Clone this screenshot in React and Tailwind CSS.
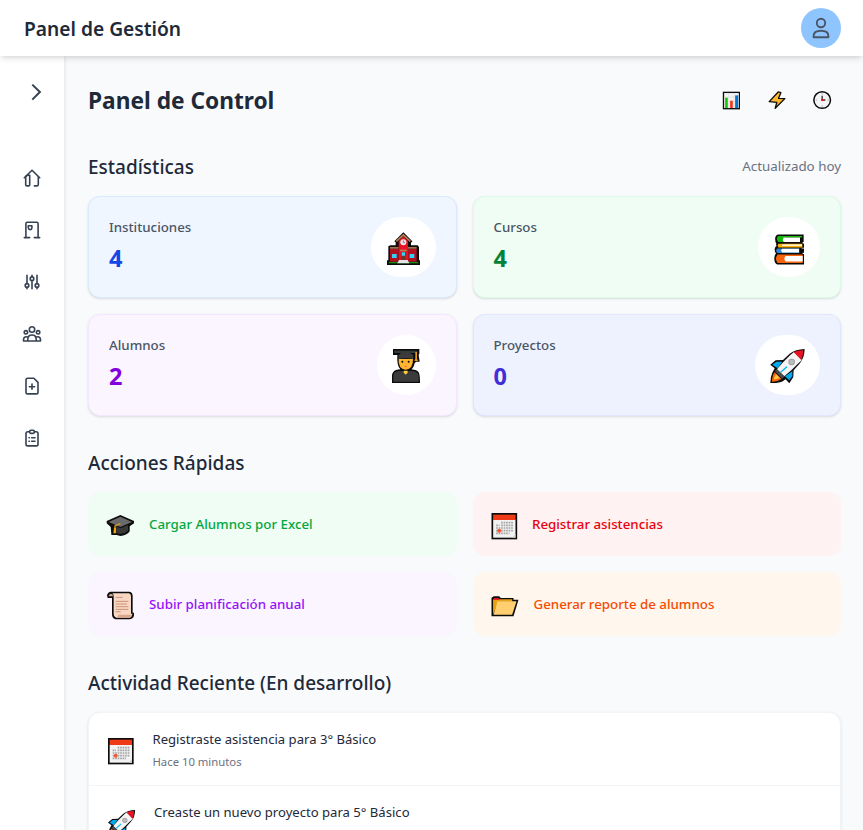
const dark = "#0c0c0c";

function School() {
  return (
    <>
      <path d="M0 98V84H4V42L10 39H26V30L22 27L49 0L76 27L72 31V39H92L96 44V84H99V98Z" fill={dark} />
      <path d="M9 50H35V88H9ZM63 50H89V88H63Z" fill="#b01020" />
      <path d="M9 44H35V49H9ZM63 44H89V49H63Z" fill="#a4714f" />
      <path d="M35 26L49 12L63 26V88H35Z" fill="#e81224" />
      <path d="M28 27L49 8L70 27" fill="none" stroke="#b87f58" strokeWidth="5" />
      <circle cx="49" cy="30" r="9" fill="#e8e8e8" />
      <path d="M49 24V31H54" fill="none" stroke="#555" strokeWidth="2" />
      <path d="M39 52H59V57H39Z" fill="#b87f58" />
      <path d="M42 59H56V84H42Z" fill="#6b3a28" />
      <path d="M44 60H54V70H44ZM15 65H29V77H15ZM68 65H82V77H68Z" fill="#31d2f7" />
      <path d="M5 89H94V93H5Z" fill="#13900e" />
      <path d="M36 83H62L67 93H31Z" fill="#e4e4e4" />
    </>
  );
}

function Student() {
  return (
    <>
      <path d="M3 0H82V14L80 17L83 38H72L68 43Q64 58 58 61Q76 63 80 70Q84 76 84 102H0V78Q2 67 12 63Q19 61 25 61Q14 50 16 18H3Z" fill={dark} />
      <path d="M7 5H76V12H7Z" fill="#343c38" />
      <path d="M20 30Q18 60 41 62Q64 60 63 30Z" fill="#ffb52e" />
      <path d="M19 30V19Q27 10 40 10Q55 10 64 19V30Q42 26 19 30Z" fill="#3b3b3b" />
      <circle cx="31" cy="38" r="3" fill={dark} />
      <circle cx="50" cy="38" r="3" fill={dark} />
      <path d="M36 51H46L44 54H38Z" fill="#f5705c" />
      <path d="M70 9H75V29L78 36H67L70 29Z" fill="#e19a1a" />
      <path d="M4 98V79Q6 66 24 66H34L41 77L48 66H57Q78 66 80 80V98Z" fill="#3b3b3b" />
      <path d="M35 65H47V71L41 77L35 71Z" fill="#ffc83d" />
    </>
  );
}

function Books() {
  return (
    <>
      <path d="M12 0H89V23H86V27H90V40H83V42H90V55H86V59H90V90H10Q0 86 1 70Q2 61 6 57Q0 50 3 40Q5 36 8 35Q5 31 7 27Q2 21 4 8Q7 0 12 0Z" fill={dark} />
      <path d="M13 5H84V9H33V23H13Q4 13 13 5Z" fill="#16b80c" />
      <path d="M29 9H78V23H29Q24 16 29 9Z" fill="#fff" />
      <path d="M13 28H85V39H13Q9 33 13 28Z" fill="#fbad09" />
      <path d="M24 30H84V35H24Z" fill="#fff3c5" />
      <path d="M10 42H76V56H10Q3 48 10 42Z" fill="#2f87d7" />
      <path d="M24 43H75V54H24Q19 48 24 43Z" fill="#fff" />
      <path d="M11 60H86V86H11Q1 73 11 60Z" fill="#f7630c" />
      <path d="M35 65H86V81H35Q27 73 35 65Z" fill="#fff" />
    </>
  );
}

function Rocket() {
  return (
    <>
      <path d="M103 0Q103 27 87 45L70 64L69 84L57 103L46 91L35 98Q19 103 0 103Q0 84 6 71L13 58L0 47L16 34L38 33L58 14Q76 1 103 0Z" fill={dark} />
      <path d="M6 47L18 38H36L22 58ZM66 67V82L57 94L44 82Z" fill="#00a8ee" />
      <path d="M71 9L95 33L82 45L63 64L42 82L20 61L39 39L60 18Z" fill="#f4f4f4" />
      <path d="M70 9Q82 4 99 4Q99 20 93 33Z" fill="#e81224" />
      <circle cx="64" cy="39" r="10" fill="#a0a0a0" />
      <circle cx="64" cy="39" r="7" fill="#bcbcbc" />
      <path d="M20 61L42 82L36 89L14 67Z" fill="#4c4c4c" />
      <path d="M31 70L50 53" stroke="#00b7f0" strokeWidth="4" />
      <path d="M13 70L34 90Q20 99 5 98Q5 80 13 70Z" fill="#f7630c" />
      <path d="M18 76L28 86Q19 93 11 91Q12 82 18 76Z" fill="#ffc83d" />
    </>
  );
}

function SmallRocket() {
  return (
    <g transform="scale(0.79)">
      <Rocket />
    </g>
  );
}

function Calendar() {
  return (
    <>
      <path d="M0 0H77V79H0Z" fill={dark} />
      <path d="M5 20H72V74H5Z" fill="#f2f2f2" />
      <path d="M5 5H72V21H5Z" fill="#f03a17" />
      <path d="M29 29H66M29 37H66M14 37H24M14 45H66M14 53H66M14 61H54" stroke="#a2a2a2" strokeWidth="5" strokeDasharray="5 2.5" fill="none" />
      <circle cx="23" cy="53" r="6" fill="#f05a3a" />
      <path d="M62 74L72 64V74Z" fill="#cfcfcf" />
    </>
  );
}

function GradCap() {
  return (
    <>
      <path d="M41 0L82 18V25L69 34V49Q60 62 41 63L30 60H14L12 36L0 25V18Z" fill={dark} />
      <path d="M41 5L76 21L41 36L6 21Z" fill="#6a6a6a" />
      <path d="M29 34L41 40L64 30V47Q52 58 38 56L29 54Z" fill="#383838" />
      <path d="M41 26L25 33L25 42" stroke="#e19a1a" strokeWidth="4" fill="none" />
      <path d="M22 38H28V55H20Z" fill="#f0a30a" />
    </>
  );
}

function Scroll() {
  return (
    <>
      <path d="M10 0H68Q77 2 77 13V63H81V72Q78 82 67 83H25Q15 80 15 68V19H2L0 10Q3 1 10 0Z" fill={dark} />
      <path d="M16 5H66Q72 6 72 14V66H76Q74 77 67 78H27Q20 76 20 67V14Q20 8 16 5Z" fill="#f7d7c4" />
      <path d="M5 14Q6 6 12 6Q18 7 18 14Z" fill="#d9a88a" />
      <path d="M34 69H76Q74 78 65 78H29Q34 75 34 69Z" fill="#d9a88a" />
      <path d="M26 17H47M26 29H64M26 37H60M26 45H64M26 53H64M26 60H41" stroke="#c99574" strokeWidth="3" />
    </>
  );
}

function Folder() {
  return (
    <>
      <path d="M0 4L7 0H23L28 5H66V10H81L66 60H0Z" fill={dark} />
      <path d="M5 9H62V16H20L5 53Z" fill="#e8a317" />
      <path d="M7 5H21L25 10H7Z" fill="#e81224" />
      <path d="M18 15H75L62 55H6Z" fill="#ffcf70" />
      <path d="M5 13H17L6 54Z" fill="#eba20c" />
    </>
  );
}

function Chart() {
  return (
    <>
      <path d="M0 0H52V53H0Z" fill={dark} />
      <path d="M4 4H48V49H4Z" fill="#f3f3f3" />
      <path d="M4 16H48M4 29H48M18 4V49M34 4V49" stroke="#dadada" strokeWidth="1.5" />
      <path d="M7 18H15V49H7Z" fill="#16c60c" />
      <path d="M22 27H30V49H22Z" fill="#f03a17" />
      <path d="M37 11H46V49H37Z" fill="#0078d7" />
    </>
  );
}

function Bolt() {
  return <path d="M30 2L38 4L31 21L50 22L21 51L26 33L3 31Z" fill="#ffb92e" stroke={dark} strokeWidth="4" strokeLinejoin="round" />;
}

function Clock() {
  return (
    <>
      <circle cx="27.5" cy="28" r="25" fill="#f4f4f4" stroke={dark} strokeWidth="4.5" />
      <path d="M27.5 8V12M27.5 44V48M8 28H12M43 28H47" stroke="#aaa" strokeWidth="3" />
      <path d="M27.500 15V28H37" stroke="#333" strokeWidth="4" fill="none" />
      <circle cx="27.5" cy="28" r="3.5" fill="#e81224" />
    </>
  );
}

// Places a drawing made on a triple-density grid inside a box of w x h pixels.
function Emoji({ art: Art, w, h, x, y }) {
  return (
    <svg width={w} height={h} viewBox={`0 0 ${w} ${h}`} className="block shrink-0" aria-hidden="true">
      <g transform={`translate(${x} ${y}) scale(0.3333)`}>
        <Art />
      </g>
    </svg>
  );
}

const navIcons = [
  {
    label: "Inicio",
    art: (
      <>
        <path d="M4.300 11.700L12 4.200l7.700 7.500" />
        <path d="M5.700 10.500v8.200q0 1.200 1.200 1.200h1.700q1.100 0 1.100-1.200V9.200q-2.600-.4-4 1.300" />
        <path d="M18.300 10.800v7.600q0 1.500-1.500 1.500H14.400" />
      </>
    ),
  },
  {
    label: "Instituciones",
    art: (
      <>
        <path d="M5.900 19.300V5.700q0-1.400 1.400-1.400h9.400q1.400 0 1.400 1.400v13.600" />
        <path d="M4.300 19.600h5.400M14.300 19.600h5.400" />
        <path d="M8.300 7.700h3.600v2q0 1.700-1.700 2-1.900-.6-1.900-2z" />
      </>
    ),
  },
  {
    label: "Ajustes",
    art: (
      <>
        <path d="M7 5.200v8.300M7 17.300v1.500M12 5.200v1.600M12 10.600v8.200M17 5.200v8.300M17 17.300v1.500" />
        <circle cx="7" cy="15.400" r="1.800" />
        <circle cx="12" cy="8.700" r="1.800" />
        <circle cx="17" cy="15.400" r="1.800" />
      </>
    ),
  },
  {
    label: "Alumnos",
    art: (
      <>
        <circle cx="12" cy="7.500" r="2.700" />
        <circle cx="5.900" cy="10.300" r="1.700" />
        <circle cx="18.100" cy="10.300" r="1.700" />
        <path d="M7.800 19v-1.700q0-4.300 4.200-4.300t4.200 4.300V19M3.500 19h17v-1.200q0-3-2.900-3-1 0-1.600.4M3.500 19v-1.200q0-3 2.900-3 1 0 1.600.4" />
      </>
    ),
  },
  {
    label: "Nuevo archivo",
    art: (
      <>
        <path d="M7.800 4.300h6.100L18 8.400v9.800q0 1.700-1.700 1.700H7.700Q6 19.900 6 18.200V6q0-1.700 1.800-1.700z" />
        <path d="M12 10.100v5.200M9.400 12.700h5.200" />
      </>
    ),
  },
  {
    label: "Tareas",
    art: (
      <>
        <path d="M9.600 5.800H7.800Q6 5.800 6 7.500v10.700q0 1.700 1.700 1.700h8.600q1.700 0 1.700-1.700V7.500q0-1.700-1.800-1.700h-1.800" />
        <rect x="9.600" y="4.200" width="4.800" height="3.200" rx="1.300" />
        <path d="M9 11.700h.4M11.700 11.700h3.300M9 15.300h.4M11.700 15.300h3.300" />
      </>
    ),
  },
];

const stats = [
  { label: "Instituciones", value: 4, box: "bg-blue-50 border-blue-100", num: "text-blue-700", icon: { art: School, w: 41, h: 36, x: 4, y: 3.3 } },
  { label: "Cursos", value: 4, box: "bg-green-50 border-green-100", num: "text-green-700", icon: { art: Books, w: 38, h: 36, x: 4, y: 5.4 } },
  { label: "Alumnos", value: 2, box: "bg-purple-50 border-purple-100", num: "text-purple-700", icon: { art: Student, w: 35, h: 36, x: 3, y: 2 } },
  { label: "Proyectos", value: 0, box: "bg-indigo-50 border-indigo-100", num: "text-indigo-700", icon: { art: Rocket, w: 41, h: 36, x: 3.3, y: 2 } },
];

const actions = [
  { label: "Cargar Alumnos por Excel", box: "bg-green-50 text-green-600", icon: { art: GradCap, w: 33, h: 32, x: 2.7, y: 7 } },
  { label: "Registrar asistencias", box: "bg-red-50 text-red-600", icon: { art: Calendar, w: 31.5, h: 32, x: 2.5, y: 5 } },
  { label: "Subir planificación anual", box: "bg-purple-50 text-purple-600", icon: { art: Scroll, w: 33, h: 32, x: 3, y: 3.7 } },
  { label: "Generar reporte de alumnos", box: "bg-orange-50 text-orange-600", icon: { art: Folder, w: 33, h: 32, x: 2.5, y: 8.3 } },
];

const activity = [
  { text: "Registraste asistencia para 3° Básico", time: "Hace 10 minutos", icon: { art: Calendar, w: 31.5, h: 32, x: 3, y: 5 } },
  { text: "Creaste un nuevo proyecto para 5° Básico", time: "", icon: { art: SmallRocket, w: 33, h: 32, x: 3, y: 4 } },
];

const tools = [
  { label: "Estadísticas", icon: { art: Chart, w: 18, h: 20, x: 0.8, y: 1.7 } },
  { label: "Acciones", icon: { art: Bolt, w: 18, h: 20, x: 0.2, y: 1.3 } },
  { label: "Actividad", icon: { art: Clock, w: 19, h: 20, x: 0, y: 0.7 } },
];

export default function App() {
  return (
    <div className="flex h-[830px] flex-col overflow-hidden bg-gray-50 font-['Noto_Sans','Open_Sans',sans-serif] text-gray-800">
      <header className="z-20 flex h-14 shrink-0 items-center justify-between bg-white pl-6 pr-[22px] shadow-md">
        <h1 className="pt-0.5 text-[19.2px]/7 font-semibold">Panel de Gestión</h1>
        <button className="flex size-10 items-center justify-center rounded-full bg-[#8ec5ff]" aria-label="Usuario">
          <svg width="24" height="24" viewBox="0 0 24 24" fill="none" stroke="#4a5565" strokeWidth="1.9" strokeLinejoin="round">
            <circle cx="12" cy="7" r="4.200" />
            <path d="M4.600 21.300v-1.200q0-5.300 7.400-5.300t7.400 5.300v1.200z" />
          </svg>
        </button>
      </header>

      <div className="flex min-h-0 flex-1">
        <aside className="z-10 flex w-16 shrink-0 flex-col items-center bg-white pt-6 shadow-[0_0_4px_rgba(0,0,0,0.14)]">
          <svg className="ml-2" width="24" height="24" viewBox="0 0 24 24" fill="none" stroke="#364153" strokeWidth="2">
            <path d="M8.300 4.600l7.600 7.400-7.600 7.600" />
          </svg>
          <nav className="mt-[62px] flex flex-col gap-7">
            {navIcons.map((n) => (
              <svg key={n.label} aria-label={n.label} width="24" height="24" viewBox="0 0 24 24" fill="none" stroke="#364153" strokeWidth="1.6" strokeLinecap="round" strokeLinejoin="round">
                {n.art}
              </svg>
            ))}
          </nav>
        </aside>

        <main className="flex-1 overflow-hidden pl-6 pr-[22px] pt-[22px]">
          <div className="mb-[30px] flex h-11 items-center justify-between">
            <h2 className="pt-0.5 text-[22.7px]/8 font-bold">Panel de Control</h2>
            <div className="flex gap-2">
              {tools.map((t) => (
                <button key={t.label} aria-label={t.label} className="flex w-[37.5px] items-center justify-center">
                  <Emoji {...t.icon} />
                </button>
              ))}
            </div>
          </div>

          <section className="mb-8">
            <div className="mb-4 flex h-7 items-center justify-between">
              <h3 className="pt-0.5 text-[19px]/7 font-medium">Estadísticas</h3>
              <span className="text-[13.35px]/5 text-gray-500">Actualizado hoy</span>
            </div>
            <div className="grid grid-cols-2 gap-4">
              {stats.map((s) => (
                <div key={s.label} className={`flex h-[102px] items-center justify-between rounded-xl border p-5 shadow-sm ${s.box}`}>
                  <div className="flex h-15 flex-col">
                    <p className="text-[13.3px]/5 font-medium text-gray-600">{s.label}</p>
                    <p className={`mt-[5px] text-[23.500px]/8 font-bold ${s.num}`}>{s.value}</p>
                  </div>
                  <div className="rounded-full bg-white p-3">
                    <Emoji {...s.icon} />
                  </div>
                </div>
              ))}
            </div>
          </section>

          <section className="mb-8">
            <h3 className="mb-4 h-7 pt-px text-[19px]/7 font-medium">Acciones Rápidas</h3>
            <div className="grid grid-cols-2 gap-4">
              {actions.map((a) => (
                <button key={a.label} className={`flex h-16 items-center gap-3 rounded-xl px-4 text-[13.3px]/5 font-medium ${a.box}`}>
                  <Emoji {...a.icon} />
                  <span>{a.label}</span>
                </button>
              ))}
            </div>
          </section>

          <section>
            <h3 className="mb-4 h-7 pt-px text-[19px]/7 font-medium">Actividad Reciente (En desarrollo)</h3>
            <div className="divide-y divide-gray-100 rounded-xl border border-gray-100 bg-white shadow-sm">
              {activity.map((a) => (
                <div key={a.text} className="flex h-[73px] items-center gap-4 px-4 last:h-[72px]">
                  <Emoji {...a.icon} />
                  <div>
                    <p className="text-[13.1px]/5">{a.text}</p>
                    <p className="mt-1 h-4 pt-px text-[11.3px]/4 text-gray-500">{a.time}</p>
                  </div>
                </div>
              ))}
            </div>
          </section>
        </main>
      </div>
    </div>
  );
}
